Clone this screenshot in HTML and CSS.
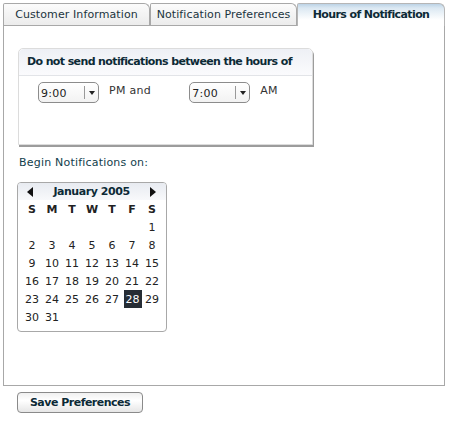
FILE: index.html
```html
<!DOCTYPE html>
<html>
<head>
<meta charset="utf-8">
<link rel="stylesheet" href="styles.css">
</head>
<body>
<div class="page">
  <div class="tabs">
    <div class="tab">Customer Information</div>
    <div class="tab">Notification Preferences</div>
    <div class="tab active">Hours of Notification</div>
  </div>
  <div class="panel">
    <div class="box">
      <div class="box-head">Do not send notifications between the hours of</div>
      <div class="box-body">
        <div class="select"><span class="sel-val">9:00</span><span class="sel-btn"><span class="tri"></span></span></div>
        <span class="lbl">PM and</span>
        <div class="select second"><span class="sel-val">7:00</span><span class="sel-btn"><span class="tri"></span></span></div>
        <span class="lbl">AM</span>
      </div>
    </div>
    <div class="begin">Begin Notifications on:</div>
    <div class="cal">
      <div class="cal-head">
        <span class="arrow left"></span>
        <span class="month">January 2005</span>
        <span class="arrow right"></span>
      </div>
      <div class="cal-grid">
        <span class="dn">S</span><span class="dn">M</span><span class="dn">T</span><span class="dn">W</span><span class="dn">T</span><span class="dn">F</span><span class="dn">S</span>
        <span></span><span></span><span></span><span></span><span></span><span></span><span class="d">1</span>
        <span class="d">2</span><span class="d">3</span><span class="d">4</span><span class="d">5</span><span class="d">6</span><span class="d">7</span><span class="d">8</span>
        <span class="d">9</span><span class="d">10</span><span class="d">11</span><span class="d">12</span><span class="d">13</span><span class="d">14</span><span class="d">15</span>
        <span class="d">16</span><span class="d">17</span><span class="d">18</span><span class="d">19</span><span class="d">20</span><span class="d">21</span><span class="d">22</span>
        <span class="d">23</span><span class="d">24</span><span class="d">25</span><span class="d">26</span><span class="d">27</span><span class="d"><span class="sel">28</span></span><span class="d">29</span>
        <span class="d">30</span><span class="d">31</span>
      </div>
    </div>
  </div>
  <div class="actions">
    <button class="btn">Save Preferences</button>
  </div>
</div>
</body>
</html>
```
FILE: styles.css
```css
html, body {
  margin: 0;
  padding: 0;
  background: #fff;
}
body {
  font-family: "DejaVu Sans", Verdana, sans-serif;
  font-size: 11px;
  color: #12323f;
}
.page {
  padding: 3px 0 0 3px;
  width: 442px;
}
.tabs {
  display: flex;
  height: 22px;
}
.tab {
  box-sizing: border-box;
  width: 147px;
  height: 22px;
  border: 1px solid #a8a8a8;
  border-bottom: none;
  border-radius: 2px 6px 0 0;
  background: linear-gradient(#fbfbfb, #ececec);
  text-align: center;
  line-height: 22px;
  color: #1b3440;
  letter-spacing: 0.1px;
}
.tab.active {
  width: 148px;
  height: 23px;
  background: linear-gradient(#bcd3e6 0, #dbe8f2 4px, #ffffff 16px);
  font-weight: bold;
  color: #0c2a36;
  position: relative;
  z-index: 1;
  border-color: #b6b6b6;
  letter-spacing: -0.6px;
}
.panel {
  box-sizing: border-box;
  height: 361px;
  border: 1px solid #a8a8a8;
  padding: 22px 0 0 14px;
}
.box {
  width: 295px;
  height: 97px;
  box-sizing: border-box;
  border: 1px solid #dcdcdc;
  border-radius: 5px 5px 0 0;
  box-shadow: 1px 2px 0 #9c9c9c;
  background: #fff;
}
.box-head {
  height: 26px;
  line-height: 26px;
  padding-left: 8px;
  font-weight: bold;
  color: #0c2a36;
  background: linear-gradient(#eef0f5, #fbfbfd);
  border-bottom: 1px solid #e2e4e8;
  border-radius: 5px 5px 0 0;
  letter-spacing: -0.62px;
}
.box-body {
  display: flex;
  align-items: flex-start;
  padding: 6px 0 0 19px;
}
.select {
  box-sizing: border-box;
  width: 61px;
  height: 21px;
  border: 1px solid #8c8c8c;
  border-radius: 5px;
  background: linear-gradient(#fff, #f2f2f2);
  display: flex;
  align-items: center;
}
.select.second {
  margin-left: 38px;
}
.sel-val {
  width: 43px;
  padding-left: 2px;
  padding-top: 2px;
  color: #222;
  letter-spacing: 0.3px;
}
.sel-btn {
  height: 13px;
  border-left: 1px solid #999;
  flex: 1;
  display: flex;
  align-items: center;
  justify-content: center;
}
.tri {
  width: 0;
  height: 0;
  border-left: 3px solid transparent;
  border-right: 3px solid transparent;
  border-top: 4px solid #222;
}
.lbl {
  margin-left: 10px;
  margin-top: 2px;
  line-height: 14px;
  color: #333;
  letter-spacing: 0.3px;
}
.begin {
  margin-top: 11px;
  margin-left: 1px;
  height: 14px;
  line-height: 14px;
  color: #123e4c;
  letter-spacing: 0.2px;
}
.cal {
  margin-top: 12px;
  margin-left: -1px;
  box-sizing: border-box;
  width: 150px;
  height: 150px;
  border: 1px solid #a8a8a8;
  border-radius: 4px;
  overflow: hidden;
}
.cal-head {
  height: 17px;
  display: flex;
  align-items: center;
  justify-content: space-between;
  padding: 0 10px 0 9px;
  background: linear-gradient(#e8ebf1, #f8f9fb);
}
.month {
  font-weight: bold;
  color: #0c2a36;
  letter-spacing: -0.45px;
}
.arrow {
  width: 0;
  height: 0;
  border-top: 5px solid transparent;
  border-bottom: 5px solid transparent;
}
.arrow.left {
  border-right: 6px solid #111;
}
.arrow.right {
  border-left: 6px solid #111;
}
.cal-grid {
  display: grid;
  grid-template-columns: repeat(7, 20px);
  grid-auto-rows: 18px;
  padding: 0 0 0 4px;
}
.cal-grid > span {
  display: flex;
  align-items: center;
  justify-content: center;
  color: #222;
}
.cal-grid .dn {
  font-weight: bold;
  color: #222;
  height: 18px;
}
.sel {
  width: 18px;
  height: 18px;
  display: flex;
  align-items: center;
  justify-content: center;
  background: #262d35;
  color: #fff;
  margin-left: 1px;
}
.actions {
  padding: 6px 0 0 14px;
}
.btn {
  box-sizing: border-box;
  width: 126px;
  height: 21px;
  border: 1px solid #8a8a8a;
  border-radius: 4px;
  background: linear-gradient(#f0f0f0, #ffffff 40%, #e6e6e6);
  font-family: "DejaVu Sans", Verdana, sans-serif;
  font-size: 11px;
  font-weight: bold;
  color: #0c2a36;
  padding: 0;
  letter-spacing: -0.5px;
}
```
